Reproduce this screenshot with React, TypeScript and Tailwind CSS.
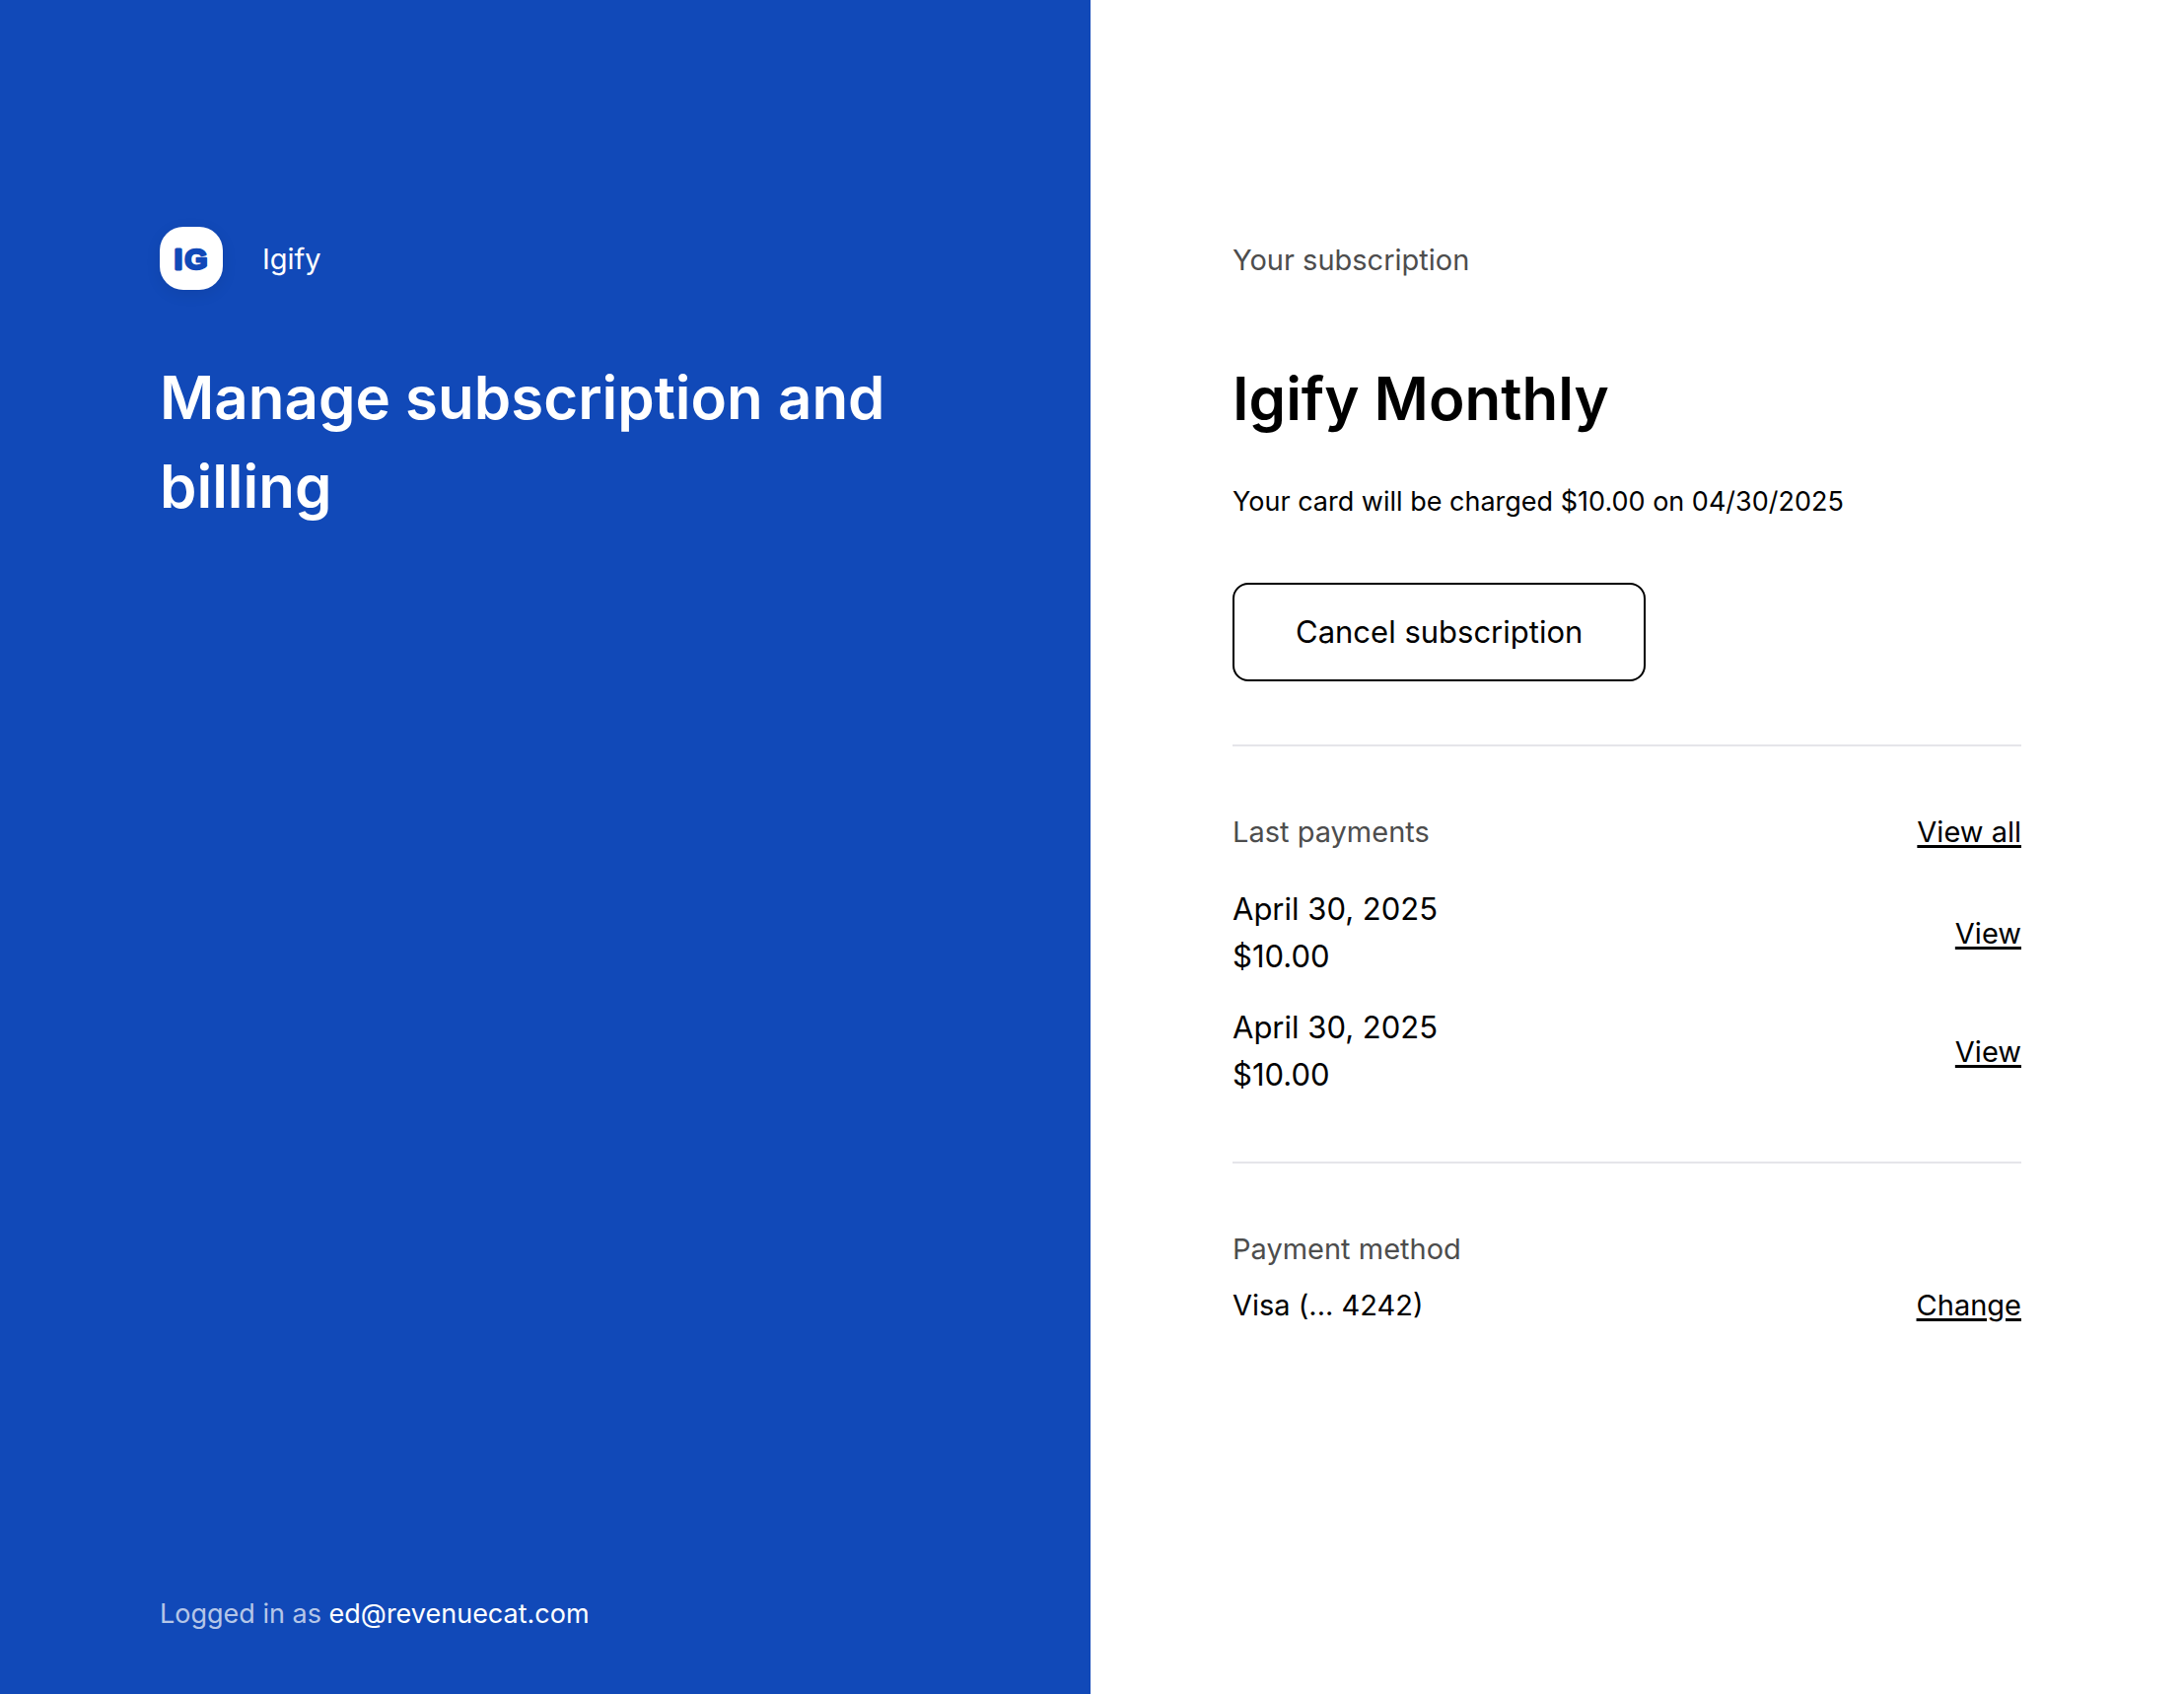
import React from "react";

const payments = [
  { id: "payment-1", date: "April 30, 2025", amount: "$10.00" },
  { id: "payment-2", date: "April 30, 2025", amount: "$10.00" },
];

const linkClass =
  "text-[29px] leading-[45px] underline decoration-[3px] underline-offset-[3px]";

function Logo() {
  return (
    <svg
      className="size-16 shrink-0 rounded-[24px] bg-white shadow-[0_4px_16px_rgba(0,0,0,0.08)]"
      viewBox="0 0 64 64"
      role="img"
      aria-label="Igify logo"
    >
      <g
        textAnchor="middle"
        fill="#1149b8"
        stroke="#1149b8"
        strokeLinejoin="round"
        className="font-['Liberation_Sans',sans-serif] text-[30px] font-bold"
      >
        <text x="19" y="43" strokeWidth="3">
          I
        </text>
        <text x="37" y="43" strokeWidth="2.5">
          G
        </text>
      </g>
    </svg>
  );
}

function Label({ children }: { children: React.ReactNode }) {
  return (
    <h2 className="text-[29px] leading-[45px] text-[#4d4d4d]">{children}</h2>
  );
}

export default function App() {
  return (
    <div className="grid min-h-screen grid-cols-[1106fr_1109fr] bg-white font-['Inter',sans-serif] text-black antialiased">
      <aside className="flex justify-end bg-[#1149b8] px-[144px] pt-[230px] pb-[60px] text-white">
        <div className="flex w-full max-w-[800px] flex-col">
          <div className="flex h-16 items-center gap-10">
            <Logo />
            <span className="text-[29px] leading-[45px]">Igify</span>
          </div>
          <h1 className="mt-16 text-[60px] leading-[90px] font-semibold">
            Manage subscription and billing
          </h1>
          <p className="mt-auto text-[27px] leading-[42px] text-white/70">
            Logged in as <span className="text-white">ed@revenuecat.com</span>
          </p>
        </div>
      </aside>

      <main className="px-[144px] pt-[231px] pb-16">
        <div className="w-full max-w-[800px]">
          <section>
            <div className="flex h-16 items-center">
              <Label>Your subscription</Label>
            </div>
            <h3 className="mt-16 text-[60px] leading-[90px] font-semibold">
              Igify Monthly
            </h3>
            <p className="mt-10 text-[27px] leading-[40px]">
              Your card will be charged $10.00 on 04/30/2025
            </p>
            <button
              type="button"
              className="mt-[62px] h-[100px] rounded-2xl border-2 border-black px-[62px] text-[31px] leading-[48px]"
            >
              Cancel subscription
            </button>
          </section>

          <section className="mt-16 border-t-2 border-[#e5e5ea] pt-16">
            <div className="flex items-center justify-between">
              <Label>Last payments</Label>
              <a href="#payments" className={linkClass}>
                View all
              </a>
            </div>
            <ul className="mt-8 flex flex-col gap-6">
              {payments.map((payment) => (
                <li
                  key={payment.id}
                  className="flex items-center justify-between text-[31px] leading-[48px]"
                >
                  <div>
                    <p>{payment.date}</p>
                    <p>{payment.amount}</p>
                  </div>
                  <a href={`#${payment.id}`} className={linkClass}>
                    View
                  </a>
                </li>
              ))}
            </ul>
          </section>

          <section className="mt-16 border-t-2 border-[#e5e5ea] pt-16">
            <Label>Payment method</Label>
            <div className="mt-3 flex items-center justify-between text-[29px] leading-[45px]">
              <p>Visa (... 4242)</p>
              <a href="#payment-method" className={linkClass}>
                Change
              </a>
            </div>
          </section>
        </div>
      </main>
    </div>
  );
}
